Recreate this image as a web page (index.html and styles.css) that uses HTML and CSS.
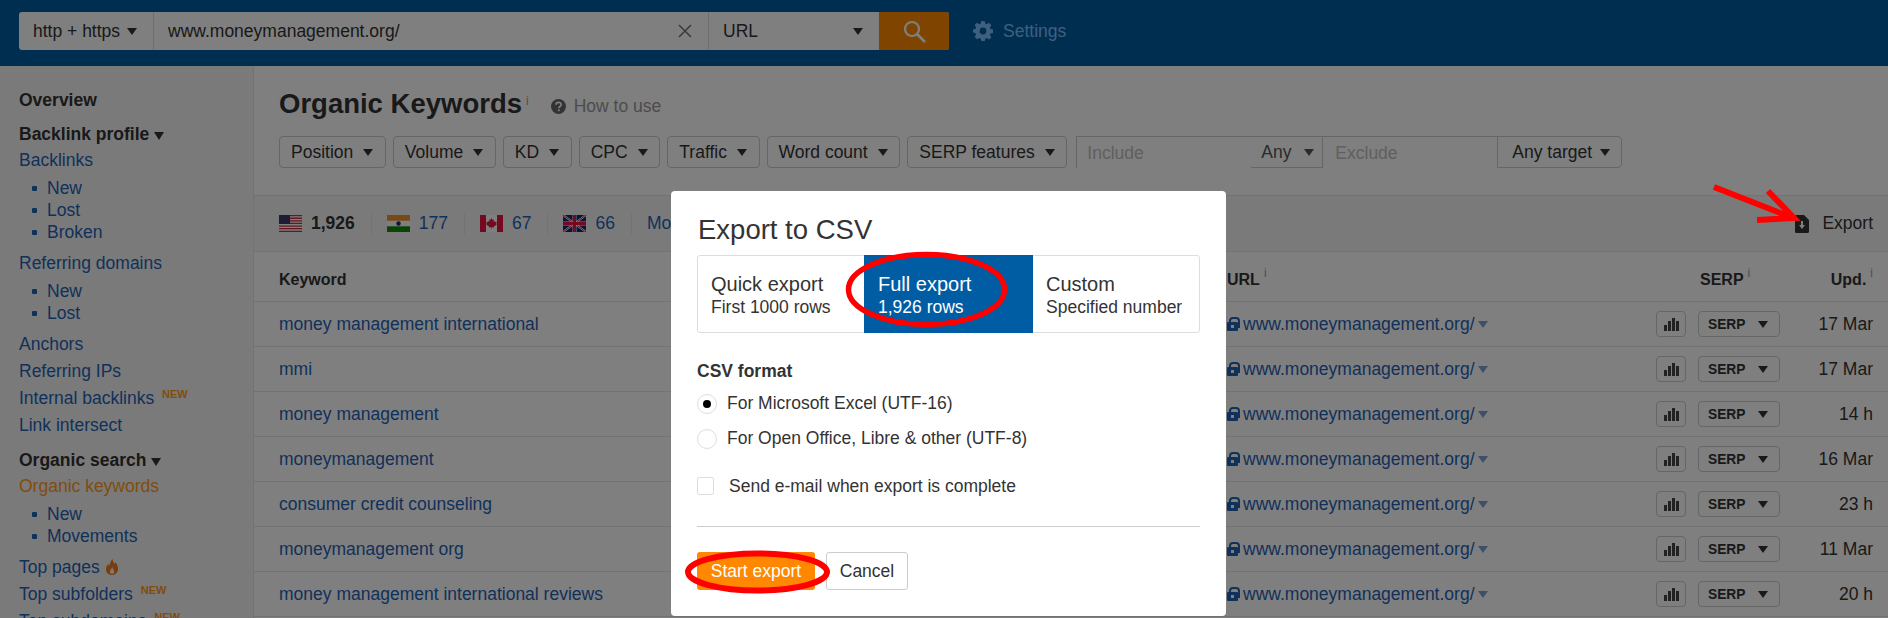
FILE: index.html
```html
<!DOCTYPE html>
<html lang="en">
<head>
  <meta charset="UTF-8">
  <title>Organic Keywords</title>
  <link rel="stylesheet" href="styles.css">
</head>
<body>
  <header class="topbar">
    <div class="search">
      <div class="search-protocol">http + https <span class="caret"></span></div>
      <div class="search-target">
        <input class="search-input" type="text" value="www.moneymanagement.org/">
        <svg class="search-clear" width="14" height="14" viewBox="0 0 14 14"><path d="M1 1l12 12M13 1L1 13" stroke="#777" stroke-width="1.6" fill="none"/></svg>
      </div>
      <div class="search-mode">URL <span class="caret"></span></div>
      <button class="search-button">
        <svg width="24" height="24" viewBox="0 0 24 24"><circle cx="10" cy="10" r="7" fill="none" stroke="#fff" stroke-width="2.2"/><path d="M15 15l8 8" stroke="#fff" stroke-width="2.6"/></svg>
      </button>
    </div>
    <div class="settings">
      <svg width="20" height="20" viewBox="0 0 20 20"><path fill="#7fbfff" d="M8.3 0h3.4l.5 2.6 1.6.7 2.2-1.5 2.4 2.4-1.5 2.2.7 1.6 2.4.5v3.4l-2.4.5-.7 1.6 1.5 2.2-2.4 2.4-2.2-1.5-1.6.7-.5 2.6H8.3l-.5-2.6-1.6-.7L4 18.3l-2.4-2.4 1.5-2.2-.7-1.6L0 11.6V8.4l2.4-.5.7-1.6-1.5-2.2L4 1.7l2.2 1.5 1.6-.7zM10 6.6a3.4 3.4 0 1 0 0 6.8 3.4 3.4 0 0 0 0-6.8z"/></svg>
      Settings
    </div>
  </header>

  <div class="layout">
    <nav class="sidebar">
      <div class="nav-title">Overview</div>
      <div class="nav-title nav-group">Backlink profile <span class="caret caret-small"></span></div>
      <a class="nav-link">Backlinks</a>
      <ul class="nav-sub">
        <li>New</li>
        <li>Lost</li>
        <li>Broken</li>
      </ul>
      <a class="nav-link">Referring domains</a>
      <ul class="nav-sub">
        <li>New</li>
        <li>Lost</li>
      </ul>
      <a class="nav-link">Anchors</a>
      <a class="nav-link">Referring IPs</a>
      <a class="nav-link">Internal backlinks <sup class="new">NEW</sup></a>
      <a class="nav-link">Link intersect</a>
      <div class="nav-title nav-group">Organic search <span class="caret caret-small"></span></div>
      <a class="nav-link nav-active">Organic keywords</a>
      <ul class="nav-sub">
        <li>New</li>
        <li>Movements</li>
      </ul>
      <a class="nav-link">Top pages
        <svg class="flame" width="12" height="16" viewBox="0 0 12 16"><path fill="#f07a20" fill-rule="evenodd" d="M6.500 0c.4 2.600 1.300 3.500 2.400 4.900.3-.7.400-1.300.4-2C10.900 4.600 12 7 12 10c0 3.600-2.600 6-6 6s-6-2.400-6-5.800c0-2.500 1.300-3.800 2.300-5.400.2.900.5 1.500 1 2C4 4.500 4.700 1.800 6.500 0zM6.200 8C5.900 9.800 3.900 10.500 3.900 12.600c0 1.500.9 2.400 2.200 2.400s2.100-1 2.100-2.400C8.200 10.800 6.700 10 6.200 8z"/></svg>
      </a>
      <a class="nav-link">Top subfolders <sup class="new">NEW</sup></a>
      <a class="nav-link">Top subdomains <sup class="new">NEW</sup></a>
    </nav>

    <main class="content">
      <section class="page-head">
        <div class="title-row">
          <h1>Organic Keywords<sup class="info">i</sup></h1>
          <span class="how-to">
            <svg width="15" height="15" viewBox="0 0 15 15"><circle cx="7.500" cy="7.500" r="7.500" fill="#666"/><path d="M5 5.800c0-3.200 5.200-3.200 5.200-.2 0 1.900-2.400 1.900-2.400 3.700" fill="none" stroke="#fff" stroke-width="1.600"/><rect x="6.900" y="10.400" width="1.800" height="1.800" fill="#fff"/></svg>
            How to use
          </span>
        </div>
        <div class="filters">
          <div class="filter">Position <span class="caret"></span></div>
          <div class="filter">Volume <span class="caret"></span></div>
          <div class="filter">KD <span class="caret"></span></div>
          <div class="filter">CPC <span class="caret"></span></div>
          <div class="filter">Traffic <span class="caret"></span></div>
          <div class="filter">Word count <span class="caret"></span></div>
          <div class="filter">SERP features <span class="caret"></span></div>
          <div class="filter-group">
            <input class="filter-input include" type="text" placeholder="Include">
            <div class="filter-any">Any <span class="caret"></span></div>
            <input class="filter-input exclude" type="text" placeholder="Exclude">
            <div class="filter-target">Any target <span class="caret"></span></div>
          </div>
        </div>
      </section>

      <section class="countries">
        <div class="country">
          <svg class="flag" viewBox="0 0 23 17"><rect width="23" height="17" fill="#fff"/><path fill="#c8313e" d="M0 0h23v1.300H0zM0 2.600h23v1.300H0zM0 5.200h23v1.300H0zM0 7.800h23v1.300H0zM0 10.400h23v1.300H0zM0 13h23v1.300H0zM0 15.700h23V17H0z"/><rect width="11" height="9" fill="#3c3b6e"/></svg>
          <b>1,926</b>
        </div>
        <div class="country">
          <svg class="flag" viewBox="0 0 23 17"><rect width="23" height="17" fill="#fff"/><rect width="23" height="5.700" fill="#f0902a"/><rect y="11.300" width="23" height="5.700" fill="#128a0a"/><circle cx="11.500" cy="8.500" r="2.200" fill="#1b2f7a"/></svg>
          <a>177</a>
        </div>
        <div class="country">
          <svg class="flag" viewBox="0 0 23 17"><rect width="23" height="17" fill="#fff"/><rect width="6" height="17" fill="#e8143c"/><rect x="17" width="6" height="17" fill="#e8143c"/><path fill="#e8143c" d="M11.500 3l1.200 2 1.300-.6-.5 2.700 1.500-1 .5 1.200 1.300-.2-.6 2 .6.500-2.800 2-.2 1-2.100-.3v2h-.4v-2l-2.100.3-.2-1-2.800-2 .6-.5-.6-2 1.300.2.500-1.200 1.500 1-.5-2.700 1.300.6z"/></svg>
          <a>67</a>
        </div>
        <div class="country">
          <svg class="flag" viewBox="0 0 23 17"><rect width="23" height="17" fill="#0e2a78"/><path d="M0 0l23 17M23 0L0 17" stroke="#fff" stroke-width="2"/><path d="M0 0l23 17M23 0L0 17" stroke="#e8143c" stroke-width="1"/><path d="M11.500 0v17M0 8.500h23" stroke="#fff" stroke-width="4"/><path d="M11.500 0v17M0 8.500h23" stroke="#e8143c" stroke-width="3"/></svg>
          <a>66</a>
        </div>
        <a class="more">More</a>
        <div class="export">
          <svg width="14" height="18" viewBox="0 0 14 18"><path fill="#333" d="M1.500 0H9l5 5v11.500a1.500 1.500 0 0 1-1.500 1.500h-11A1.500 1.500 0 0 1 0 16.500v-15A1.500 1.500 0 0 1 1.500 0z"/><path fill="#fff" d="M6 6h2v4h2l-3 4-3-4h2z"/></svg>
          Export
        </div>
      </section>

      <section class="keywords">
        <div class="row row-head">
          <div class="col-keyword">Keyword</div>
          <div class="col-url">URL<sup class="info">i</sup></div>
          <div class="col-serp">SERP<sup class="info">i</sup></div>
          <div class="col-date">Upd.<sup class="info">i</sup></div>
        </div>
        <div class="row">
          <a class="col-keyword">money management international</a>
          <a class="col-url"><span class="lock"></span>www.moneymanagement.org/<span class="caret caret-link"></span></a>
          <span class="chart-btn"><span class="bars"><i></i><i></i><i></i><i></i></span></span>
          <span class="serp-btn">SERP <span class="caret"></span></span>
          <div class="col-date">17 Mar</div>
        </div>
        <div class="row">
          <a class="col-keyword">mmi</a>
          <a class="col-url"><span class="lock"></span>www.moneymanagement.org/<span class="caret caret-link"></span></a>
          <span class="chart-btn"><span class="bars"><i></i><i></i><i></i><i></i></span></span>
          <span class="serp-btn">SERP <span class="caret"></span></span>
          <div class="col-date">17 Mar</div>
        </div>
        <div class="row">
          <a class="col-keyword">money management</a>
          <a class="col-url"><span class="lock"></span>www.moneymanagement.org/<span class="caret caret-link"></span></a>
          <span class="chart-btn"><span class="bars"><i></i><i></i><i></i><i></i></span></span>
          <span class="serp-btn">SERP <span class="caret"></span></span>
          <div class="col-date">14 h</div>
        </div>
        <div class="row">
          <a class="col-keyword">moneymanagement</a>
          <a class="col-url"><span class="lock"></span>www.moneymanagement.org/<span class="caret caret-link"></span></a>
          <span class="chart-btn"><span class="bars"><i></i><i></i><i></i><i></i></span></span>
          <span class="serp-btn">SERP <span class="caret"></span></span>
          <div class="col-date">16 Mar</div>
        </div>
        <div class="row">
          <a class="col-keyword">consumer credit counseling</a>
          <a class="col-url"><span class="lock"></span>www.moneymanagement.org/<span class="caret caret-link"></span></a>
          <span class="chart-btn"><span class="bars"><i></i><i></i><i></i><i></i></span></span>
          <span class="serp-btn">SERP <span class="caret"></span></span>
          <div class="col-date">23 h</div>
        </div>
        <div class="row">
          <a class="col-keyword">moneymanagement org</a>
          <a class="col-url"><span class="lock"></span>www.moneymanagement.org/<span class="caret caret-link"></span></a>
          <span class="chart-btn"><span class="bars"><i></i><i></i><i></i><i></i></span></span>
          <span class="serp-btn">SERP <span class="caret"></span></span>
          <div class="col-date">11 Mar</div>
        </div>
        <div class="row">
          <a class="col-keyword">money management international reviews</a>
          <a class="col-url"><span class="lock"></span>www.moneymanagement.org/<span class="caret caret-link"></span></a>
          <span class="chart-btn"><span class="bars"><i></i><i></i><i></i><i></i></span></span>
          <span class="serp-btn">SERP <span class="caret"></span></span>
          <div class="col-date">20 h</div>
        </div>
      </section>
    </main>
  </div>

  <div class="dim"></div>

  <div class="modal">
    <h2>Export to CSV</h2>
    <div class="tabs">
      <div class="tab">
        <div class="tab-name">Quick export</div>
        <div class="tab-note">First 1000 rows</div>
      </div>
      <div class="tab tab-active">
        <div class="tab-name">Full export</div>
        <div class="tab-note">1,926 rows</div>
      </div>
      <div class="tab">
        <div class="tab-name">Custom</div>
        <div class="tab-note">Specified number</div>
      </div>
    </div>
    <div class="format-label">CSV format</div>
    <div class="option"><span class="radio radio-on"></span>For Microsoft Excel (UTF-16)</div>
    <div class="option"><span class="radio"></span>For Open Office, Libre &amp; other (UTF-8)</div>
    <div class="email"><span class="checkbox"></span>Send e-mail when export is complete</div>
    <div class="actions">
      <button class="btn-start">Start export</button>
      <button class="btn-cancel">Cancel</button>
    </div>
  </div>

  <!-- red markup drawn on top of the screenshot -->
  <svg class="markup" width="1888" height="618" viewBox="0 0 1888 618">
    <ellipse cx="926.500" cy="289.500" rx="78" ry="35" fill="none" stroke="#f00" stroke-width="5.500"/>
    <ellipse cx="757.500" cy="572" rx="69.500" ry="18.500" fill="none" stroke="#f00" stroke-width="6"/>
    <path d="M1714 187l79 31M1768 191l26 27-37 2" fill="none" stroke="#f00" stroke-width="6"/>
  </svg>
</body>
</html>
```

FILE: styles.css
```css
* {
  box-sizing: border-box;
}
html, body {
  height: 100%;
  overflow: hidden;
}
body {
  margin: 0;
  font-family: "Liberation Sans", Arial, sans-serif;
  font-size: 17.5px;
  color: #333;
  background-color: #fff;
}
a {
  color: #1f62b5;
}
input {
  font: inherit;
  color: #333;
  border: 0;
  outline: 0;
  background: transparent;
}
input::placeholder {
  color: #c0c0c0;
}
button {
  font: inherit;
  cursor: pointer;
}
.caret {
  display: inline-block;
  width: 0;
  height: 0;
  border-style: solid;
  border-width: 7px 5px 0;
  border-color: #333 transparent transparent;
}
.caret-small {
  border-width: 8px 5px 0;
}
.info {
  font-size: 12px;
  font-weight: normal;
  color: #999;
  margin-left: 4px;
  vertical-align: 8px;
  line-height: 0;
}

/* Top bar */
.topbar {
  display: flex;
  height: 66px;
  padding: 12px 0 0 19px;
  background-color: #005da3;
}
.search {
  display: flex;
  width: 930px;
  height: 38px;
  background-color: #fff;
  border-radius: 3px;
}
.search-protocol {
  display: flex;
  align-items: center;
  gap: 7px;
  width: 135px;
  padding-left: 14px;
  border-right: 1px solid #ddd;
}
.search-target {
  display: flex;
  align-items: center;
  flex: 1;
  padding: 0 16px 0 14px;
}
.search-input {
  flex: 1;
  padding: 0;
}
.search-mode {
  display: flex;
  align-items: center;
  justify-content: space-between;
  width: 171px;
  padding: 0 16px 0 14px;
  border-left: 1px solid #ddd;
}
.search-button {
  display: flex;
  align-items: center;
  justify-content: center;
  width: 70px;
  padding: 0;
  border: 0;
  border-radius: 0 3px 3px 0;
  background-color: #ff8800;
}
.settings {
  display: flex;
  align-items: center;
  gap: 10px;
  height: 38px;
  margin-left: 24px;
  color: #7fbfff;
}

/* Sidebar */
.layout {
  display: flex;
  height: 552px;
}
.sidebar {
  flex: none;
  width: 254px;
  padding: 21px 0 0 19px;
  background-color: #f5f5f5;
  border-right: 1px solid #e6e6e6;
}
.nav-title {
  height: 26px;
  line-height: 26px;
  font-weight: bold;
}
.nav-group {
  margin-top: 8px;
}
.nav-link {
  display: block;
  height: 27px;
  line-height: 27px;
  white-space: nowrap;
}
.nav-active {
  color: #ff9a1a;
}
.nav-sub {
  list-style: none;
  margin: 3px 0 7px;
  padding: 0;
}
.nav-sub li {
  display: flex;
  align-items: center;
  height: 22px;
  color: #1f62b5;
}
.nav-sub li::before {
  content: "";
  width: 5px;
  height: 5px;
  margin: 0 10px 0 13px;
  border-radius: 1px;
  background-color: #1f62b5;
}
.new {
  margin-left: 3px;
  font-size: 11px;
  font-weight: bold;
  color: #ff9a1a;
  vertical-align: 6px;
  line-height: 0;
}
.flame {
  margin-left: 1px;
  vertical-align: -2px;
}

/* Main column */
.content {
  flex: 1;
  min-width: 0;
}
.page-head {
  padding: 20px 25px 27px;
}
.title-row {
  display: flex;
  align-items: center;
  height: 34px;
}
h1 {
  margin: 2px 0 0;
  font-size: 27.500px;
  font-weight: bold;
  white-space: nowrap;
}
.how-to {
  display: flex;
  align-items: center;
  gap: 8px;
  margin: 6px 0 0 22px;
  color: #999;
}
.filters {
  display: flex;
  gap: 7px;
  margin-top: 16px;
}
.filter {
  display: flex;
  align-items: center;
  gap: 10px;
  height: 32px;
  padding: 1px 11.600px 0 11px;
  border: 1px solid #ccc;
  border-radius: 4px;
  white-space: nowrap;
}
.filter-group {
  display: flex;
  height: 32px;
  margin-left: 2px;
}
.filter-input {
  padding: 1px 0 0 10px;
  border-top: 1px solid #ccc;
}
.include {
  width: 175px;
  border-left: 1px solid #ccc;
}
.exclude {
  width: 174px;
  padding-left: 12px;
}
.filter-any {
  display: flex;
  align-items: center;
  gap: 13px;
  width: 72px;
  padding-left: 10px;
  color: #555;
  border: 1px solid #ccc;
  border-left: 0;
}
.filter-any .caret {
  border-top-color: #555;
}
.filter-target {
  display: flex;
  align-items: center;
  gap: 8px;
  width: 125px;
  padding-left: 14px;
  border: 1px solid #ccc;
  border-radius: 0 4px 4px 0;
}

/* Country strip */
.countries {
  display: flex;
  align-items: center;
  height: 57px;
  padding: 0 15px 0 25px;
  background-color: #f5f5f5;
  border-top: 1px solid #e6e6e6;
  border-bottom: 1px solid #e6e6e6;
}
.country {
  display: flex;
  align-items: center;
  gap: 9px;
  height: 22px;
  padding-right: 16px;
  margin-right: 15px;
  border-right: 1px solid #e6e6e6;
}
.flag {
  width: 23px;
  height: 17px;
}
.export {
  display: flex;
  align-items: center;
  gap: 13px;
  margin-left: auto;
}

/* Keyword table */
.row {
  display: flex;
  align-items: center;
  height: 45px;
  padding: 0 15px 0 25px;
  border-bottom: 1px solid #e6e6e6;
}
.row-head {
  height: 50px;
  padding-top: 6px;
  font-size: 16px;
  font-weight: bold;
}
.col-keyword {
  flex: none;
  width: 948px;
}
.col-url {
  display: flex;
  align-items: center;
  flex: none;
  width: 429px;
}
.row-head .col-url {
  display: block;
  width: 473px;
}
.col-serp {
  flex: none;
  width: 110px;
}
.col-date {
  margin-left: auto;
  white-space: nowrap;
}
.lock {
  position: relative;
  width: 11px;
  height: 9px;
  margin: 5px 5px 0 0;
  border-radius: 1px;
  background-color: #1f62b5;
}
.lock::before {
  content: "";
  position: absolute;
  left: 2px;
  top: -5px;
  width: 7px;
  height: 7px;
  border: 2px solid #1f62b5;
  border-radius: 4px 4px 0 0;
}
.lock::after {
  content: "";
  position: absolute;
  left: 4px;
  top: 3px;
  width: 3px;
  height: 3px;
  background-color: #fff;
}
.caret-link {
  margin-left: 3px;
  border-top-color: #7f9fd0;
}
.chart-btn {
  display: flex;
  align-items: center;
  justify-content: center;
  flex: none;
  width: 30px;
  height: 26px;
  margin-right: 12px;
  border: 1px solid #ccc;
  border-radius: 4px;
}
.bars {
  display: flex;
  align-items: flex-end;
  gap: 1px;
  height: 13px;
}
.bars i {
  width: 3px;
  background-color: #444;
}
.bars i:nth-child(1) { height: 6px; }
.bars i:nth-child(2) { height: 10px; }
.bars i:nth-child(3) { height: 13px; }
.bars i:nth-child(4) { height: 10px; }
.serp-btn {
  display: flex;
  align-items: center;
  justify-content: space-between;
  flex: none;
  width: 82px;
  height: 26px;
  padding: 0 11px 0 9px;
  border: 1px solid #ccc;
  border-radius: 4px;
  font-size: 13.750px;
  font-weight: bold;
}

/* Dialog */
.dim {
  position: fixed;
  top: 0;
  right: 0;
  bottom: 0;
  left: 0;
  background-color: rgba(0, 0, 0, 0.5);
}
.modal {
  position: fixed;
  left: 671px;
  top: 191px;
  width: 555px;
  height: 425px;
  padding: 22px 26px 0;
  background-color: #fff;
  border-radius: 4px;
}
h2 {
  margin: 0 0 8px;
  padding-left: 1px;
  font-size: 27.500px;
  font-weight: normal;
  line-height: 34px;
}
.tabs {
  display: flex;
  height: 78px;
  border: 1px solid #ddd;
  border-radius: 3px;
}
.tab {
  flex: none;
  width: 166px;
  padding: 17px 0 0 13px;
  line-height: 23px;
  font-size: 17.500px;
  white-space: nowrap;
}
.tab-active {
  width: 169px;
  margin: -1px 0;
  padding: 18px 0 0 14px;
  color: #fff;
  background-color: #005da3;
}
.tab-name {
  font-size: 20px;
}
.format-label {
  margin-top: 26px;
  line-height: 24px;
  font-weight: bold;
}
.option {
  display: flex;
  align-items: center;
  gap: 10px;
  height: 35px;
}
.format-label + .option {
  margin-top: 3px;
}
.radio {
  display: flex;
  align-items: center;
  justify-content: center;
  width: 20px;
  height: 20px;
  border: 1px solid #ddd;
  border-radius: 50%;
}
.radio-on::before {
  content: "";
  width: 8px;
  height: 8px;
  border-radius: 50%;
  background-color: #000;
}
.email {
  display: flex;
  align-items: center;
  gap: 15px;
  height: 20px;
  margin-top: 20px;
}
.checkbox {
  width: 17px;
  height: 18px;
  border: 1px solid #ddd;
  border-radius: 2px;
}
.actions {
  display: flex;
  gap: 11px;
  margin-top: 30px;
  padding-top: 25px;
  border-top: 1px solid #ccc;
}
.btn-start {
  width: 118px;
  height: 38px;
  padding: 0;
  border: 0;
  border-radius: 3px;
  color: #fff;
  background-color: #ff8800;
}
.btn-cancel {
  width: 82px;
  height: 38px;
  padding: 0;
  color: #333;
  border: 1px solid #ccc;
  border-radius: 3px;
  background-color: #fff;
}
.markup {
  position: fixed;
  left: 0;
  top: 0;
}
```
